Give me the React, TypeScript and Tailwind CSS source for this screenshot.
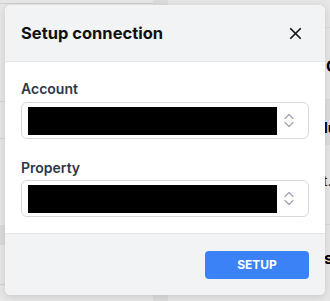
import { X } from 'lucide-react';

const font = { fontFamily: 'Inter, Lato, Arial, sans-serif' };

const UpDown = () => (
  <svg width="10" height="15" viewBox="0 0 10 15" fill="none" stroke="#a0a7b4" strokeWidth="1.3" strokeLinecap="round" strokeLinejoin="round">
    <path d="M1 5.5 L5 1.5 L9 5.5" />
    <path d="M1 9.5 L5 13.5 L9 9.5" />
  </svg>
);

const SelectBox = () => (
  <div className="flex h-[37px] items-center rounded-md border border-[#d4d8df] bg-white pl-[6px] pr-[14px]">
    <div className="h-[28px] w-[249px] bg-black" />
    <div className="ml-auto flex items-center">
      <UpDown />
    </div>
  </div>
);

export default function App() {
  return (
    <div className="relative h-[301px] w-[330px] overflow-hidden bg-[#e6e6e6]" style={font}>
      {/* page behind the overlay */}
      <div className="flex h-full">
        <div className="flex w-[153px] shrink-0 flex-col">
          <div className="h-[4px] border-b border-[#cfcfcf]" />
          <div className="h-[98px] border-b border-[#d3d3d3]" />
          <div className="h-[37px] border-b border-[#d3d3d3]" />
          <div className="h-[86px]" />
          <div className="h-[20px] bg-[#dadada]" />
          <div className="h-[40px] border-b border-[#d3d3d3]" />
        </div>
        <div className="w-[15px] shrink-0 bg-[#dcdcde]" />
        <div className="flex min-w-0 flex-1 flex-col overflow-hidden whitespace-nowrap">
          <div className="h-[28px] shrink-0 border-b border-[#dadada]" />
          <div className="flex h-[72px] shrink-0 items-center border-b border-[#dadada] pl-[158px] pt-[4px] text-[16px] font-bold text-black">Co</div>
          <div className="flex h-[45px] shrink-0 items-center bg-[#dddddd] pl-[156px] pt-[10px] text-[14px] font-bold text-black">lu</div>
          <div className="flex h-[80px] shrink-0 items-center border-b border-[#dadada] pb-[8px] pl-[155px] text-[14px] text-[#333]">t.</div>
          <div className="h-[20px] shrink-0" />
          <div className="flex h-[40px] shrink-0 items-center pb-[14px] pl-[156px] text-[16px] font-bold text-black">s</div>
        </div>
      </div>

      {/* modal */}
      <div className="absolute left-[5px] top-[5px] flex w-[320px] flex-col overflow-hidden rounded-[6px] bg-white shadow-[0_2px_8px_rgba(0,0,0,0.12)]">
        <div className="flex h-[57px] items-center justify-between border-b border-[#e3e5e9] bg-[#f2f3f5] pl-4 pr-[20px]">
          <h2 className="text-[16.5px] font-bold text-[#111]">Setup connection</h2>
          <X className="h-[19px] w-[19px] text-[#1a1a1a]" strokeWidth={2.2} />
        </div>
        <div className="flex flex-col px-4 pb-[16px] pt-[17px]">
          <label className="text-[14px] font-semibold leading-5 text-[#2d3748]">Account</label>
          <div className="mt-[3px]">
            <SelectBox />
          </div>
          <label className="mt-[19px] text-[14px] font-semibold leading-5 text-[#2d3748]">Property</label>
          <div className="mt-[2px]">
            <SelectBox />
          </div>
        </div>
        <div className="flex h-[62px] items-center justify-end border-t border-[#e3e5e9] bg-[#f2f3f5] pr-4">
          <button className="h-[28px] w-[104px] rounded-[4px] bg-[#3b82f6] text-[12px] font-bold text-white">
            SETUP
          </button>
        </div>
      </div>
    </div>
  );
}
